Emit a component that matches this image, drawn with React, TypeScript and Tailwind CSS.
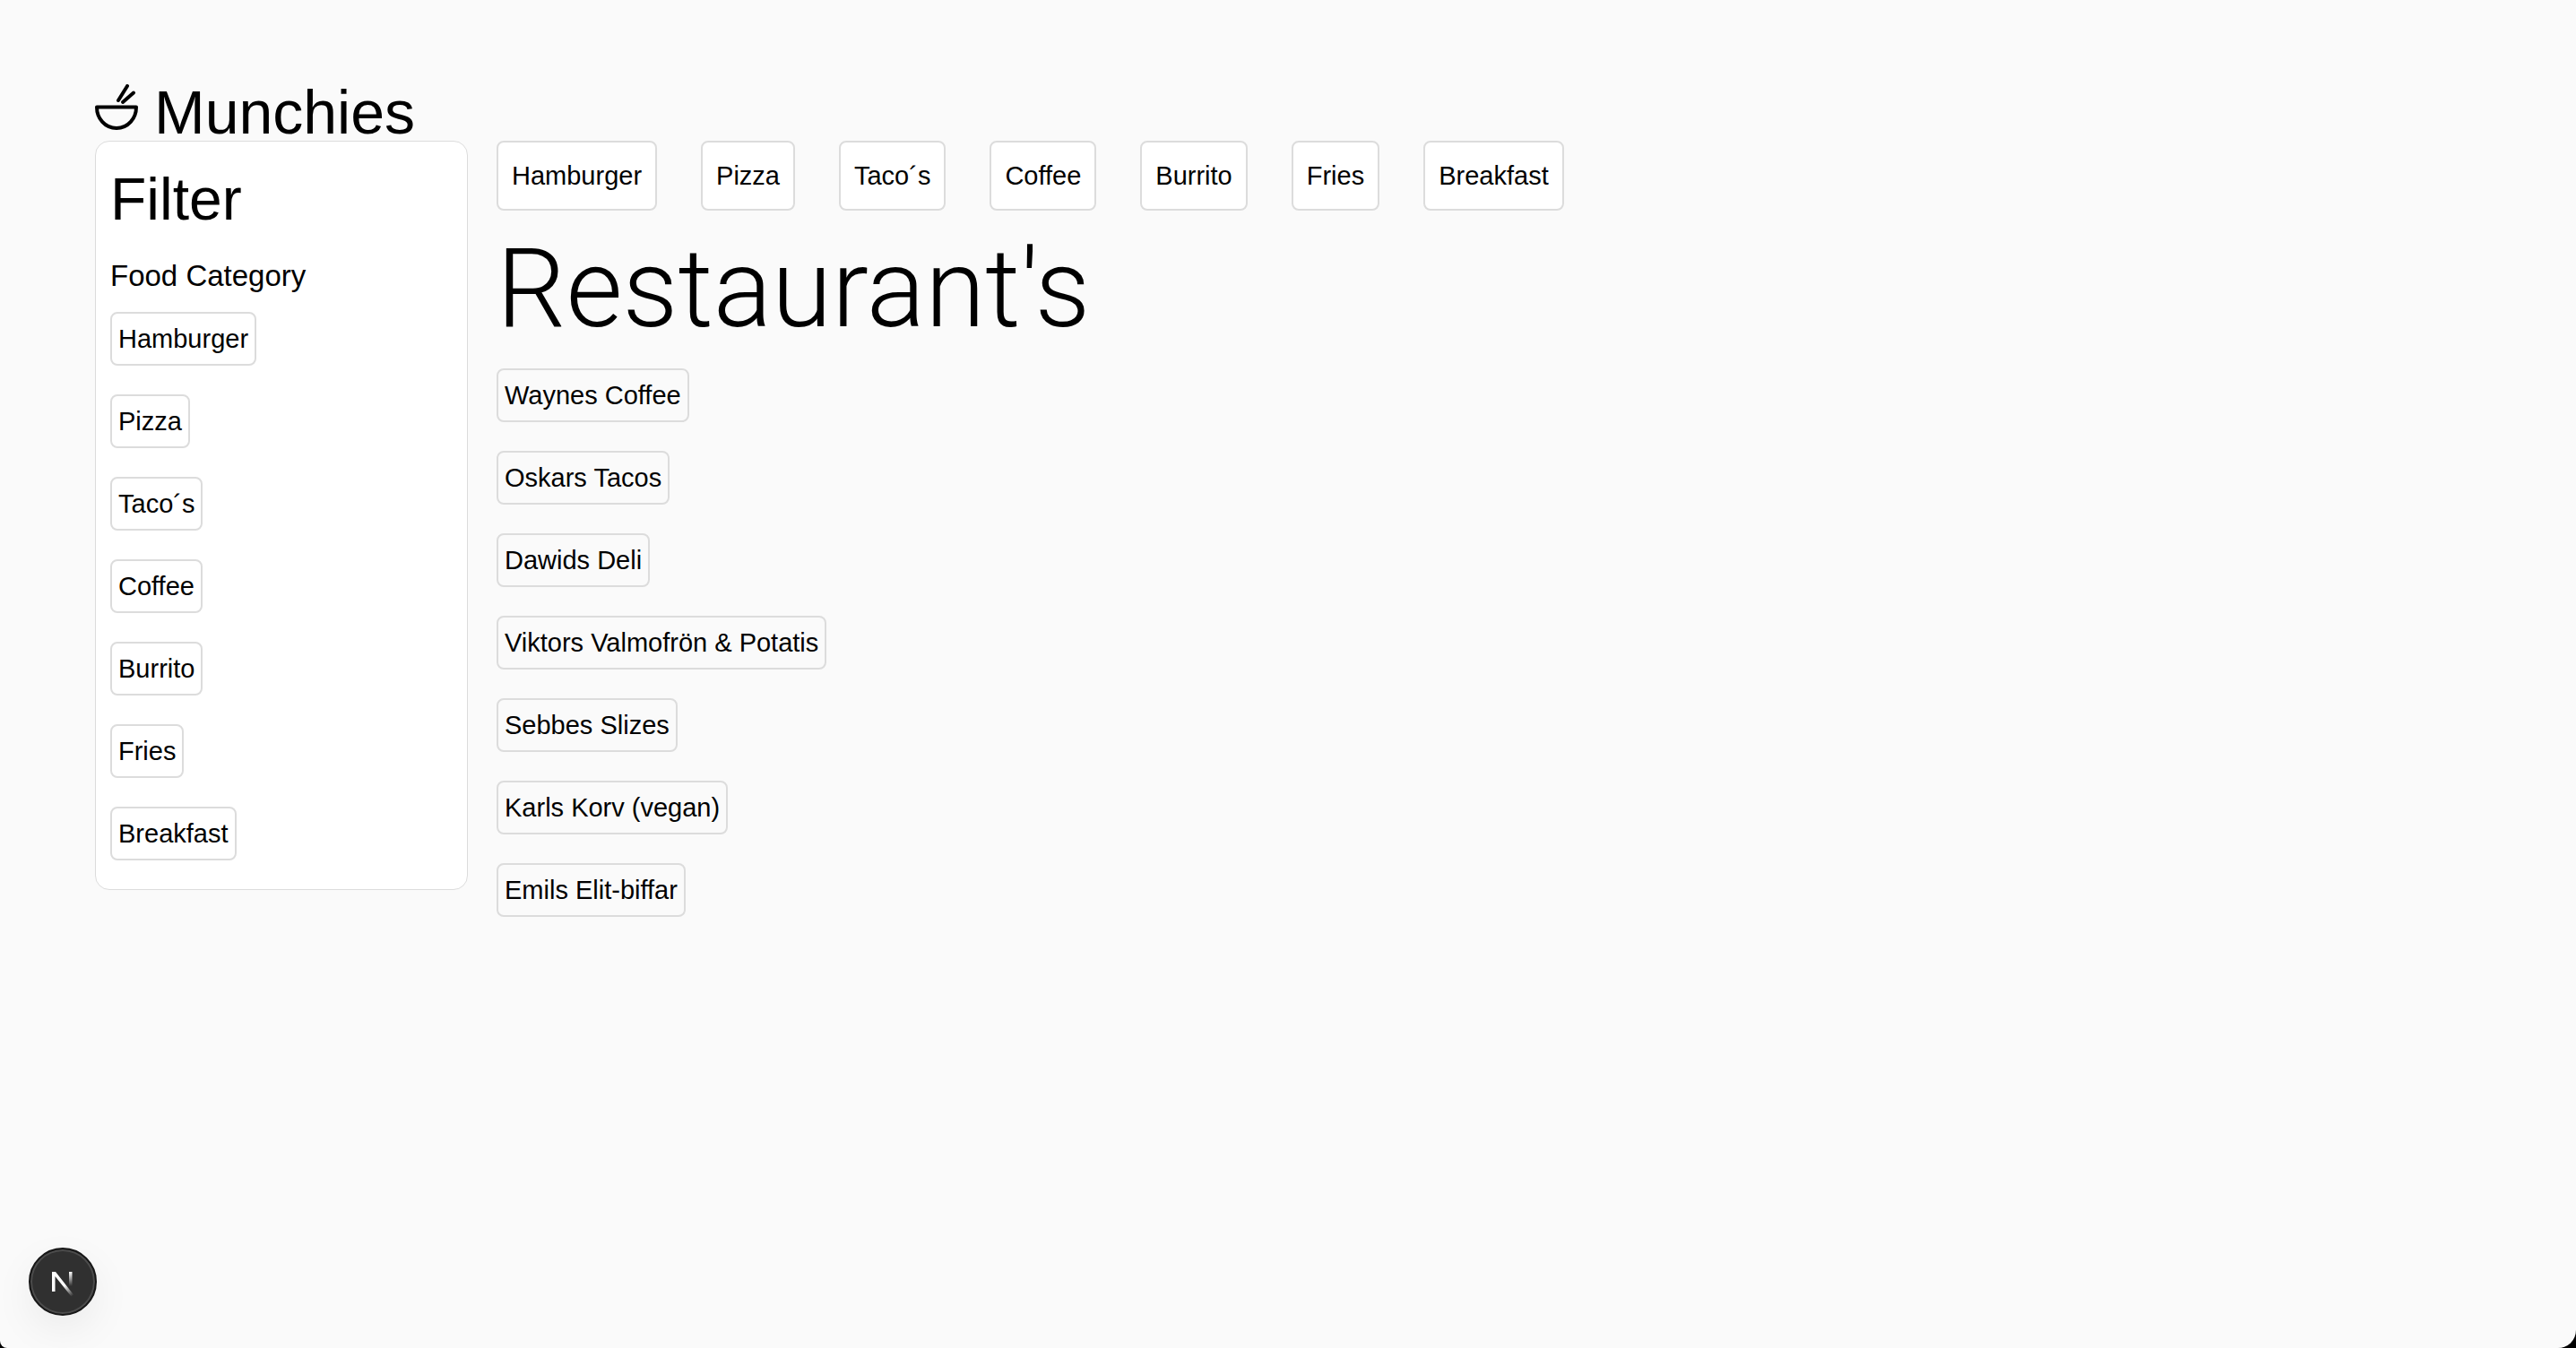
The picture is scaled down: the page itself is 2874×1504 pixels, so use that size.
import React from "react";

const categories = ["Hamburger", "Pizza", "Taco´s", "Coffee", "Burrito", "Fries", "Breakfast"];

const restaurants = [
  "Waynes Coffee",
  "Oskars Tacos",
  "Dawids Deli",
  "Viktors Valmofrön & Potatis",
  "Sebbes Slizes",
  "Karls Korv (vegan)",
  "Emils Elit-biffar",
];

function Logo() {
  return (
    <a href="/" className="flex h-[63px] w-fit items-start gap-[18px]">
      <svg
        className="h-[52px] w-12 shrink-0"
        viewBox="0 0 48 52"
        fill="none"
        stroke="#000"
        strokeWidth="4"
        strokeLinecap="round"
        strokeLinejoin="round"
        aria-hidden="true"
      >
        <path d="M2 25.5H46C46 38 37 49 24 49C11 49 2 38 2 25.5Z" />
        <path d="M26 18L36 2" />
        <path d="M31 20L43 9.5" />
      </svg>
      <span className="text-[68px] leading-[62px]">Munchies</span>
    </a>
  );
}

function TagList({ items }: { items: string[] }) {
  return (
    <ul className="flex flex-col items-start gap-8">
      {items.map((item) => (
        <li key={item} className="flex">
          <button className="rounded-lg border-2 border-[#dcdcdc] px-[7px] py-2 text-[29px] leading-10">
            {item}
          </button>
        </li>
      ))}
    </ul>
  );
}

function DevBadge() {
  return (
    <button
      aria-label="Open developer tools"
      className="fixed bottom-9 left-8 size-[76px] rounded-full border-2 border-[#171717] bg-[#303030] shadow-[inset_0_0_0_2px_#4c4c4c,0_16px_48px_-4px_rgba(0,0,0,0.08)]"
    >
      <svg className="size-full" viewBox="0 0 72 72" fill="none" aria-hidden="true">
        <defs>
          <linearGradient id="diagonal" x1="38" y1="40" x2="47" y2="52" gradientUnits="userSpaceOnUse">
            <stop stopColor="#fff" />
            <stop offset="1" stopColor="#fff" stopOpacity="0" />
          </linearGradient>
          <linearGradient id="stem" x1="45" y1="25" x2="45" y2="41" gradientUnits="userSpaceOnUse">
            <stop stopColor="#fff" />
            <stop offset="1" stopColor="#fff" stopOpacity="0" />
          </linearGradient>
        </defs>
        <path d="M24 47V25H28L48 50.5L45.5 52.5L27.5 30V47Z" fill="url(#diagonal)" />
        <path d="M43 25H46.5V41H43Z" fill="url(#stem)" />
      </svg>
    </button>
  );
}

export default function App() {
  return (
    <div className="min-h-screen bg-black">
      <div className="min-h-screen rounded-br-[20px] rounded-bl-[8px] bg-[#fafafa] px-[106px] pt-[94px] font-['Liberation_Sans',Arial,sans-serif] text-black">
        <header>
          <Logo />
        </header>
        <div className="flex items-start gap-8">
          <aside className="w-[416px] shrink-0 rounded-2xl border border-[#dcdcdc] bg-white px-4 pt-8 pb-8">
            <h1 className="text-[66px] leading-[64px]">Filter</h1>
            <h2 className="mt-[34px] mb-[20px] text-[33px] leading-10">Food Category</h2>
            <TagList items={categories} />
          </aside>
          <main className="min-w-0 flex-1">
            <nav className="flex flex-wrap gap-[49px]">
              {categories.map((item) => (
                <button
                  key={item}
                  className="rounded-lg border-2 border-[#dcdcdc] bg-white px-[15px] py-4 text-[29px] leading-[42px]"
                >
                  {item}
                </button>
              ))}
            </nav>
            <h1 className="mt-4 mb-[16px] font-['Roboto','Liberation_Sans',sans-serif] text-[122px] leading-[144px] font-light">
              Restaurant's
            </h1>
            <TagList items={restaurants} />
          </main>
        </div>
      </div>
      <DevBadge />
    </div>
  );
}
